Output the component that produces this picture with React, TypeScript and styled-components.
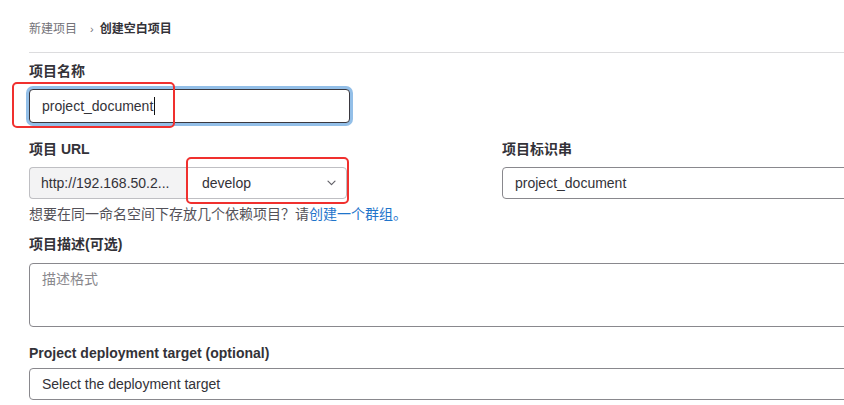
import React from "react";
import styled, { createGlobalStyle } from "styled-components";

const Global = createGlobalStyle`
  html, body { margin: 0; padding: 0; background: #fff; overflow: hidden; }
  body { font-family: "Liberation Sans", "Noto Sans CJK SC", sans-serif; color: #333238; }
  * { box-sizing: border-box; }
`;

const Page = styled.div`
  width: 1000px;
  padding-left: 29px;
`;

const Breadcrumb = styled.nav`
  display: flex;
  align-items: center;
  height: 53px;
  padding-top: 20px;
  padding-bottom: 14px;
  border-bottom: 1px solid #dcdcde;
  font-size: 12px;
  line-height: 18px;
`;

const Crumb = styled.span<{ $current?: boolean }>`
  color: ${(p) => (p.$current ? "#333238" : "#737278")};
  font-weight: ${(p) => (p.$current ? 700 : 400)};
`;

const Sep = styled.span`
  color: #737278;
  font-size: 11px;
  margin: 0 6px 0 13px;
`;

const Form = styled.div`
  display: flex;
  flex-direction: column;
`;

const Label = styled.div<{ $mt: number; $mb: number }>`
  font-size: 14px;
  font-weight: 700;
  line-height: 20px;
  margin-top: ${(p) => p.$mt}px;
  margin-bottom: ${(p) => p.$mb}px;
  color: #333238;
`;

const Anchor = styled.div`
  position: relative;
`;

const Highlight = styled.div<{ $l: number; $t: number; $w: number; $h: number }>`
  position: absolute;
  left: ${(p) => p.$l}px;
  top: ${(p) => p.$t}px;
  width: ${(p) => p.$w}px;
  height: ${(p) => p.$h}px;
  border: 2px solid #f0302e;
  border-radius: 5px;
  pointer-events: none;
`;

const Input = styled.div<{ $w?: number; $h?: number; $focus?: boolean }>`
  display: flex;
  align-items: center;
  width: ${(p) => (p.$w ? `${p.$w}px` : "100%")};
  height: ${(p) => p.$h ?? 32}px;
  padding: 0 12px;
  border: 1px solid ${(p) => (p.$focus ? "#3a383f" : "#89888d")};
  border-radius: 4px;
  background: #fff;
  font-size: 14px;
  color: #333238;
  box-shadow: ${(p) => (p.$focus ? "0 0 0 3px #93bfe8" : "none")};
`;

const Caret = styled.span`
  display: inline-block;
  width: 1px;
  height: 18px;
  background: #111;
  margin-left: 1px;
`;

const Columns = styled.div`
  display: grid;
  grid-template-columns: 449px 449px;
  column-gap: 24px;
`;

const Column = styled.div`
  display: flex;
  flex-direction: column;
`;

const InputGroup = styled.div`
  display: flex;
  height: 32px;
`;

const Prefix = styled.div`
  display: flex;
  align-items: center;
  width: 157px;
  padding: 0 11px;
  background: #f3f3f4;
  border: 1px solid #bfbfc3;
  border-right: none;
  border-radius: 4px 0 0 4px;
  font-size: 14px;
  color: #333238;
  white-space: nowrap;
`;

const Select = styled.div<{ $w?: number }>`
  display: flex;
  align-items: center;
  justify-content: space-between;
  width: ${(p) => (p.$w ? `${p.$w}px` : "100%")};
  height: 32px;
  padding: 0 10px 0 15px;
  border: 1px solid #bfbfc3;
  border-radius: 0 4px 4px 0;
  background: #fff;
  font-size: 14px;
  color: #333238;
`;

const Help = styled.div`
  margin-top: 5px;
  font-size: 14px;
  line-height: 20px;
  color: #535158;
`;

const Link = styled.a`
  color: #1f75cb;
  text-decoration: none;
`;

const TextArea = styled.div`
  height: 64px;
  width: 100%;
  padding: 6px 12px;
  border: 1px solid #89888d;
  border-radius: 4px;
  font-size: 14px;
  line-height: 18px;
  color: #89888d;
`;

const Chevron = () => (
  <svg width="9" height="6" viewBox="0 0 9 6" fill="none">
    <path d="M1 1.2l3.5 3.5 3.5-3.5" stroke="#626168" strokeWidth="1.2" strokeLinecap="round" strokeLinejoin="round" />
  </svg>
);

export default function App() {
  return (
    <>
      <Global />
      <Page>
        <Breadcrumb>
          <Crumb>新建项目</Crumb>
          <Sep>›</Sep>
          <Crumb $current>创建空白项目</Crumb>
        </Breadcrumb>
        <Form>
          <Label $mt={8} $mb={8}>项目名称</Label>
          <Anchor>
            <Input $w={321} $h={34} $focus>
              project_document
              <Caret />
            </Input>
            <Highlight $l={-17} $t={-7} $w={163} $h={46} />
          </Anchor>
          <Columns>
            <Column>
              <Label $mt={16} $mb={8}>项目 URL</Label>
              <InputGroup>
                <Prefix>http://192.168.50.2...</Prefix>
                <Anchor>
                  <Select $w={161}>
                    develop
                    <Chevron />
                  </Select>
                  <Highlight $l={0} $t={-10} $w={163} $h={47} />
                </Anchor>
              </InputGroup>
            </Column>
            <Column>
              <Label $mt={16} $mb={8}>项目标识串</Label>
              <Input>project_document</Input>
            </Column>
          </Columns>
          <Help>
            想要在同一命名空间下存放几个依赖项目？请<Link>创建一个群组。</Link>
          </Help>
          <Label $mt={10} $mb={9}>项目描述(可选)</Label>
          <TextArea>描述格式</TextArea>
          <Label $mt={16} $mb={5}>Project deployment target (optional)</Label>
          <Input>Select the deployment target</Input>
        </Form>
      </Page>
    </>
  );
}
